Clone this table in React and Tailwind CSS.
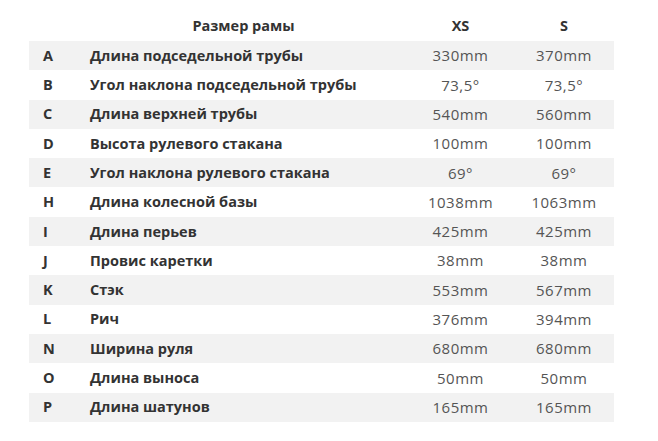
import React from "react";

const rows = [
  ["A", "Длина подседельной трубы", "330mm", "370mm"],
  ["B", "Угол наклона подседельной трубы", "73,5°", "73,5°"],
  ["C", "Длина верхней трубы", "540mm", "560mm"],
  ["D", "Высота рулевого стакана", "100mm", "100mm"],
  ["E", "Угол наклона рулевого стакана", "69°", "69°"],
  ["H", "Длина колесной базы", "1038mm", "1063mm"],
  ["I", "Длина перьев", "425mm", "425mm"],
  ["J", "Провис каретки", "38mm", "38mm"],
  ["K", "Стэк", "553mm", "567mm"],
  ["L", "Рич", "376mm", "394mm"],
  ["N", "Ширина руля", "680mm", "680mm"],
  ["O", "Длина выноса", "50mm", "50mm"],
  ["P", "Длина шатунов", "165mm", "165mm"],
];

export default function App() {
  return (
    <div className="w-[658px] h-[441px] bg-white pt-[10px] pl-[29px] font-['Open_Sans',sans-serif]">
      <table className="w-[585px] table-fixed border-collapse">
        <colgroup>
          <col className="w-[51px]" />
          <col className="w-[327px]" />
          <col className="w-[107px]" />
          <col className="w-[100px]" />
        </colgroup>
        <thead>
          <tr className="h-[31px] text-[14.5px]">
            <th></th>
            <th className="text-center font-bold text-[#333]">Размер рамы</th>
            <th className="text-center font-bold text-[#333]">XS</th>
            <th className="text-center font-bold text-[#333]">S</th>
          </tr>
        </thead>
        <tbody>
          {rows.map((r, i) => (
            <tr key={r[0]} className={i % 2 === 0 ? "h-[29.3px] bg-[#f2f2f2]" : "h-[29.3px] bg-white"}>
              <td className="pl-[14px] text-[14.5px] font-bold text-[#333]">{r[0]}</td>
              <td className="pl-[10px] text-[14.5px] font-bold text-[#333]">{r[1]}</td>
              <td className="text-center text-[15px] tracking-[0.5px] text-[#555]">{r[2]}</td>
              <td className="text-center text-[15px] tracking-[0.5px] text-[#555]">{r[3]}</td>
            </tr>
          ))}
        </tbody>
      </table>
    </div>
  );
}
